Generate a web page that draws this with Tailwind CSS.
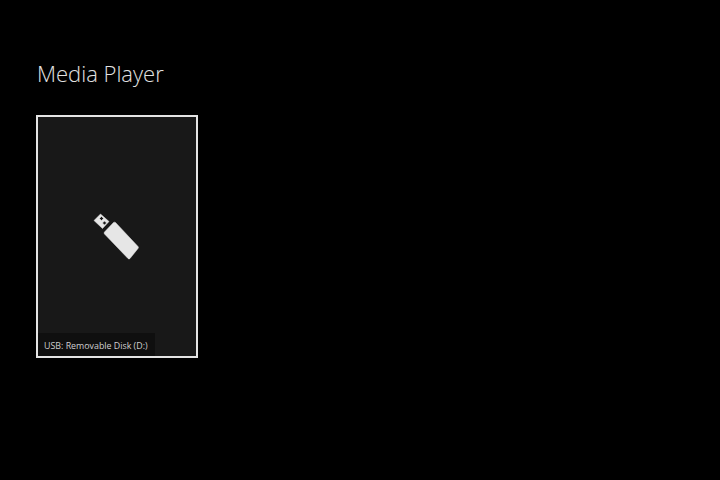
<!DOCTYPE html>
<html lang="en">
<head>
  <meta charset="UTF-8">
  <title>Media Player</title>
  <script src="https://cdn.jsdelivr.net/npm/@tailwindcss/browser@4"></script>
</head>
<body class="bg-black w-[720px] h-[480px] overflow-hidden font-['Open_Sans',sans-serif]">
  <div class="pl-[36px] pt-[58px]">
    <h1 class="pl-px h-[57px] text-[22px] leading-[30px] font-light text-[#e2e2e2]">Media Player</h1>
    <!-- Tile -->
    <div class="relative w-[162px] h-[243px] border-2 border-[#e4e4e4] bg-[#181818] flex items-center justify-center">
      <svg class="w-[64px] h-[64px] mt-[1px]" viewBox="0 0 64 64">
        <path fill="#e6e6e6" stroke="#e6e6e6" stroke-width="0.5" fill-rule="evenodd" d="M9 15.5 15.5 9 24 16.5 17.5 23.5ZM14.5 13.5l2 2 2-2-2-2ZM17.5 18l2 2 2-2-2-2ZM19.5 27 28.5 17.5Q29.5 16.8 30.5 17.5L53 41.5Q53.8 42.5 53 43.5L45 53.5Q44 54.5 43 53.5L19.5 29Q18.7 28 19.5 27Z"/>
      </svg>
      <div class="absolute left-0 bottom-0 w-[117px] h-[23px] pl-[6px] bg-[#0f0f0f] text-[8.85px] leading-[26px] text-[#d0d0d0] whitespace-nowrap">USB: Removable Disk (D:)</div>
    </div>
  </div>
</body>
</html>
